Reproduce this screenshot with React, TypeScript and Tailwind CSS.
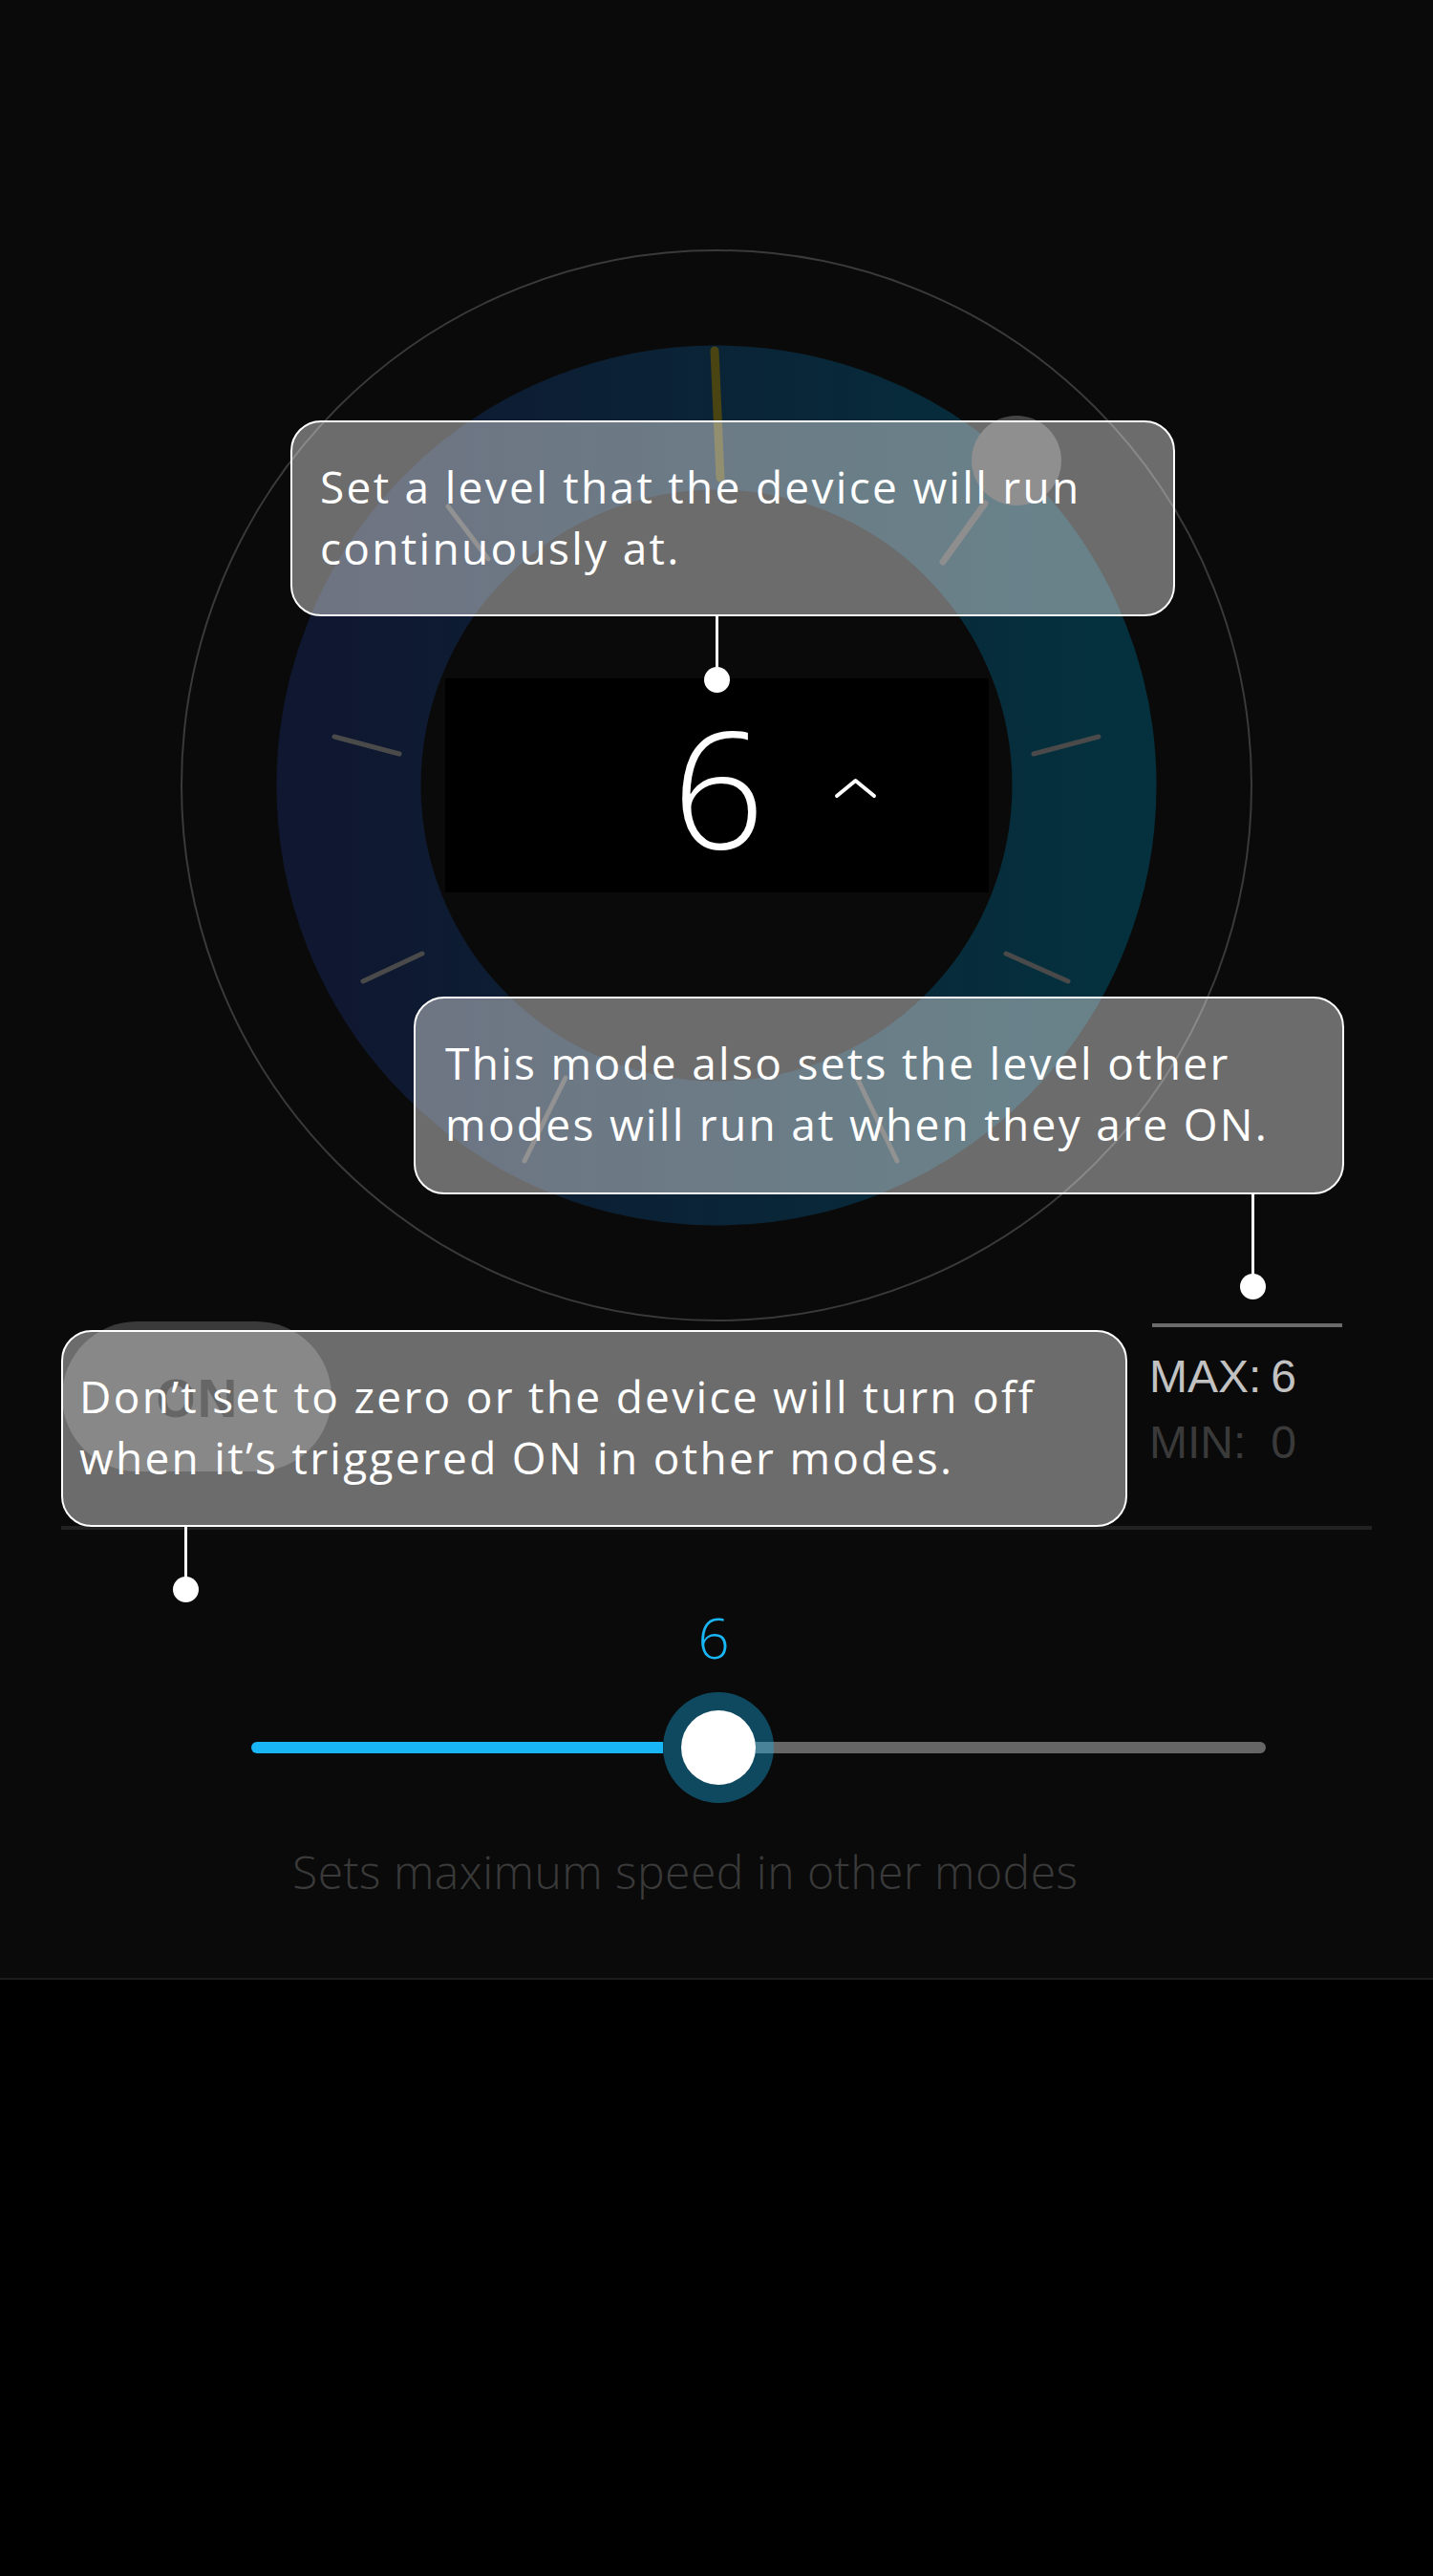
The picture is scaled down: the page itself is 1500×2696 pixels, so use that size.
import React from "react";

type Tip = {
  lines: string[];
  box: string;
  pad: string;
  stem: string;
  stemLen: string;
};

const tips: Tip[] = [
  {
    lines: ["Set a level that the device will run", "continuously at."],
    box: "left-[304px] top-[440px] w-[926px] h-[205px]",
    pad: "pl-[29px]",
    stem: "left-[431px]",
    stemLen: "h-[68px]",
  },
  {
    lines: ["This mode also sets the level other", "modes will run at when they are ON."],
    box: "left-[433px] top-[1043px] w-[974px] h-[207px]",
    pad: "pl-[31px]",
    stem: "left-[863px]",
    stemLen: "h-[98px]",
  },
  {
    lines: ["Don\u2019t set to zero or the device will turn off", "when it\u2019s triggered ON in other modes."],
    box: "left-[64px] top-[1392px] w-[1116px] h-[206px]",
    pad: "pl-[17px]",
    stem: "left-[115px]",
    stemLen: "h-[67px]",
  },
];

function Dial() {
  return (
    <div className="relative mx-auto flex h-[1122px] w-[1122px] items-center justify-center">
      {/* dial drawing */}
      <svg className="absolute inset-0" width="1122" height="1122" viewBox="0 0 1122 1122">
        <defs>
          <linearGradient id="ring" x1="176" y1="0" x2="946" y2="0" gradientUnits="userSpaceOnUse">
            <stop offset="0" stopColor="#0f1830" />
            <stop offset="1" stopColor="#05303d" />
          </linearGradient>
        </defs>
        <circle cx="561" cy="561" r="560" fill="none" stroke="#3a3a3a" strokeWidth="2" />
        <circle cx="561" cy="561" r="385" fill="none" stroke="url(#ring)" strokeWidth="151" />
        <g stroke="#4a4a4a" strokeWidth="5" strokeLinecap="round">
          <line x1="280" y1="269" x2="322" y2="324" />
          <line x1="161" y1="510" x2="229" y2="528" />
          <line x1="961" y1="510" x2="893" y2="528" />
          <line x1="191" y1="766" x2="253" y2="737" />
          <line x1="929" y1="766" x2="864" y2="737" />
          <line x1="403" y1="867" x2="360" y2="954" />
          <line x1="709" y1="869" x2="750" y2="954" />
        </g>
        <line x1="842" y1="266" x2="798" y2="327" stroke="#444" strokeWidth="7" strokeLinecap="round" />
        <circle cx="875" cy="221" r="47" fill="#454545" />
        <line x1="559" y1="106" x2="565" y2="239" stroke="#4a4412" strokeWidth="9" strokeLinecap="round" />
      </svg>

      <div className="relative grid h-[224px] w-[569px] grid-cols-[1fr_auto_1fr] items-center bg-black">
        <div />
        <span className="pl-[4px] text-[170px] font-light leading-none text-white">6</span>
        <svg className="ml-[72px] mt-[6px]" width="45" height="22" viewBox="0 0 45 22">
          <polyline points="3,19 22.5,3 42,19" fill="none" stroke="#fff" strokeWidth="4" strokeLinecap="round" strokeLinejoin="round" />
        </svg>
      </div>
    </div>
  );
}

function Tooltip({ tip }: { tip: Tip }) {
  return (
    <div
      className={`absolute ${tip.box} rounded-[32px] border-2 border-white bg-[rgba(255,255,255,0.4)] pt-[35px] ${tip.pad}`}
    >
      <p className="whitespace-nowrap text-[46px] leading-[64px] tracking-[2.3px] text-white">
        {tip.lines[0]}
        <br />
        {tip.lines[1]}
      </p>
      <div className={`absolute top-full ${tip.stem} flex flex-col items-center`}>
        <div className={`w-[3px] ${tip.stemLen} bg-white`} />
        <div className="-mt-[13px] h-[27px] w-[27px] rounded-full bg-white" />
      </div>
    </div>
  );
}

export default function App() {
  return (
    <div className="min-h-[2696px] w-[1500px] bg-black font-['Segoe_UI','Open_Sans',sans-serif]">
      <div className="relative h-[2072px] border-b-2 border-[#1c1c1c] bg-[#0a0a0a]">
        <div className="pt-[261px]">
          <Dial />
        </div>

        <div className="mx-[64px] flex h-[218px] items-start justify-between border-b-4 border-[#222]">
          <div className="ml-[1px] flex h-[157px] w-[282px] items-center justify-center rounded-full bg-[#3a3a3a]">
            <span className="text-[54px] font-bold leading-none text-black">ON</span>
          </div>
          <div className="mr-[31px] mt-[2px] w-[199px] font-['Liberation_Sans',Arial,sans-serif] text-[48px] leading-[69px]">
            <div className="h-[4px] bg-[#6b6b6b]" />
            <div className="mt-[17px] grid grid-cols-[auto_1fr] gap-x-[10px]">
              <span className="-ml-[3px] text-[#c2c2c2]">MAX:</span>
              <span className="text-[#c2c2c2]">6</span>
              <span className="-ml-[3px] text-[#3a3a3a]">MIN:</span>
              <span className="text-[#3a3a3a]">0</span>
            </div>
          </div>
        </div>

        <div className="pt-[84px]">
          <div className="flex justify-center">
            <span className="pr-[6px] text-[58px] font-light leading-[58px] text-[#19b6f5]">6</span>
          </div>
          <div className="mt-[28px] flex h-[116px] items-center pl-[263px] pr-[175px]">
            <div className="h-[12px] w-[431px] rounded-l-full bg-[#19b6f5]" />
            <div className="relative z-10 -mr-[58px] flex h-[116px] w-[116px] items-center justify-center rounded-full bg-[rgba(25,182,245,0.37)]">
              <div className="h-[78px] w-[78px] rounded-full bg-white" />
            </div>
            <div className="h-[12px] flex-1 rounded-r-full bg-[#666]" />
          </div>
          <p className="mt-[43px] pl-[306px] text-[48px] font-light leading-[58px] tracking-[0.5px] text-[#3a3a3a]">
            Sets maximum speed in other modes
          </p>
        </div>

        {tips.map((t, i) => (
          <Tooltip key={i} tip={t} />
        ))}
      </div>
    </div>
  );
}
